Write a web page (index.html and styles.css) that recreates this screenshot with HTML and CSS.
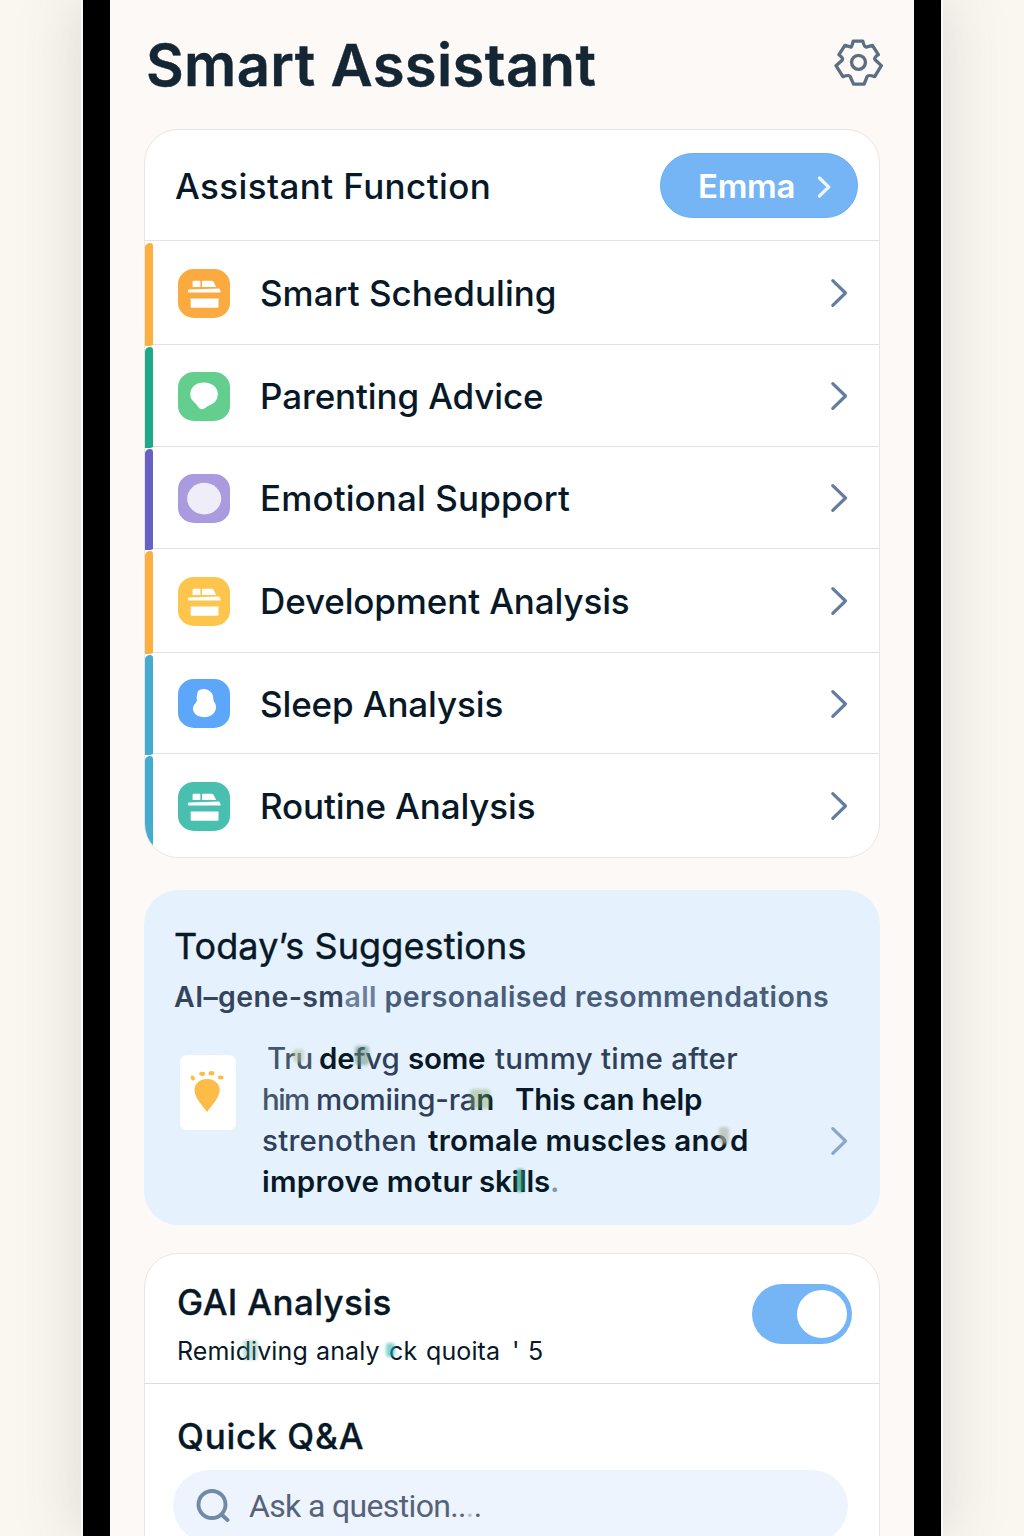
FILE: index.html
```html
<!DOCTYPE html>
<html lang="en">
<head>
<meta charset="utf-8">
<title>Smart Assistant</title>
<link rel="stylesheet" href="styles.css">
</head>
<body>
<svg width="0" height="0" class="defs" aria-hidden="true">
  <symbol id="chevron" viewBox="0 0 18 30"><path d="M2.800 2.700 15.500 15 2.800 27.300"/></symbol>
  <symbol id="box" viewBox="0 0 52 49">
    <path d="M14.600 12.600q0-.9 1-.9h5.900q.9 0 .9.9v5.500h-7.800zM24 12.600q0-.9 1-.9h8.700q1.300 0 1.900 1.100l2.600 5.300H24z"/>
    <path d="M9.800 22q0-1.400 1.400-1.400l30-1.200 1.600 3.400q.3.800-.8.800H11.200q-1.400 0-1.400-1.600z"/>
    <path d="M12.700 29.500h27.800v8.200q0 1-1 1H13.700q-1 0-1-1z"/>
  </symbol>
</svg>
<div class="phone">
  <header class="top">
    <h1 class="title">Smart Assistant</h1>
    <svg class="gear" viewBox="581 57 148 141"><path d="M639 63h29q4 17 10 18l19-5 18 28q-16 10-9 16l18 17-20 33q-20-6-23 0l-9 23h-32l-10-23q-3-6-22 0l-21-33 17-15q8-6-8-18l18-28 19 5q4-8 6-18z"/><circle cx="655" cy="127" r="21"/></svg>
  </header>

  <section class="card functions">
    <div class="functions-head">
      <h2 class="label head-label">Assistant Function</h2>
      <button class="profile"><span class="profile-name">Emma</span><svg class="profile-chev" viewBox="0 0 18 30"><use href="#chevron"/></svg></button>
    </div>
    <div class="row"><span class="stripe amber"></span><div class="row-body">
      <svg class="tile orange" viewBox="0 0 52 49"><use href="#box"/></svg>
      <span class="label l1">Smart Scheduling</span><svg class="chev raised"><use href="#chevron"/></svg></div></div>
    <div class="row"><span class="stripe emerald"></span><div class="row-body">
      <svg class="tile green" viewBox="0 0 52 49"><path d="M26 10.500c8 0 14 5 13.800 11.500-.2 6-3 9-7.800 11-4 1.700-5.500 4.500-8.500 4.200-3-.4-4-4-6.500-6.200-3.500-3-5-5.500-4.700-9.500.4-6.500 5.700-11 13.700-11z"/></svg>
      <span class="label l2">Parenting Advice</span><svg class="chev raised"><use href="#chevron"/></svg></div></div>
    <div class="row"><span class="stripe indigo"></span><div class="row-body">
      <svg class="tile violet" viewBox="0 0 52 49"><ellipse cx="26.200" cy="24.600" rx="17" ry="15.800"/></svg>
      <span class="label l3">Emotional Support</span><svg class="chev"><use href="#chevron"/></svg></div></div>
    <div class="row"><span class="stripe amber"></span><div class="row-body">
      <svg class="tile yellow" viewBox="0 0 52 49"><use href="#box"/></svg>
      <span class="label l4">Development Analysis</span><svg class="chev"><use href="#chevron"/></svg></div></div>
    <div class="row"><span class="stripe cyan"></span><div class="row-body">
      <svg class="tile blue" viewBox="0 0 52 49"><path d="M20 12c2-2 6-2.500 8.500-1.600 4.500 1.300 7 5.100 6.800 9.100-.1 3.500 3 4.500 2.700 9-.4 6-5.500 9.700-11.500 9.700s-11.500-3.200-11.500-8.700c0-4.500 4-5.500 4-9-1-2 .5-6.500 1-8.500z"/></svg>
      <span class="label l5">Sleep Analysis</span><svg class="chev"><use href="#chevron"/></svg></div></div>
    <div class="row"><span class="stripe cyan"></span><div class="row-body">
      <svg class="tile teal" viewBox="0 0 52 49"><use href="#box"/></svg>
      <span class="label l6">Routine Analysis</span><svg class="chev"><use href="#chevron"/></svg></div></div>
  </section>

  <section class="suggestions">
    <h2 class="sugg-title">Today’s Suggestions</h2>
    <p class="sugg-sub"><span class="ink">AI–gene-sm</span><span class="faded">all</span> personalised resommendations</p>
    <div class="sugg-body">
      <svg class="tip" viewBox="0 0 56 75"><path d="M27 57C23 51 14.500 43 14.500 35c0-6.500 5.500-11 12.500-11s12.700 4.500 12.700 11c0 8-8.700 16-12.700 22z"/><ellipse cx="12.800" cy="23" rx="2" ry="2.600" transform="rotate(-30 12.800 23)"/><ellipse cx="22.200" cy="18.800" rx="3" ry="2.100"/><ellipse cx="31.500" cy="18.200" rx="2.900" ry="2.200"/><ellipse cx="40.700" cy="22.500" rx="2.900" ry="1.900"/></svg>
      <div class="lines">
        <div class="line line1"><span class="soft worn smudge s7">Tru</span><span class="strong smudge s1">de<span class="soft">fvg</span></span><span class="strong">some</span><span class="soft spaced">tummy time after</span></div>
        <div class="line line2"><span class="soft worn tight">him</span><span class="soft smudge s2">momiing-ra<b class="strong">n</b></span><span class="strong">This can help</span></div>
        <div class="line line3"><span class="soft spaced">strenothen</span><span class="strong spaced smudge s3">tromale muscles ano<span class="gap">d</span></span></div>
        <div class="line line4"><span class="strong spaced">improve motur</span><span class="strong smudge s4">skills<span class="dot">.</span></span></div>
      </div>
      <svg class="chev pale"><use href="#chevron"/></svg>
    </div>
  </section>

  <section class="card analysis">
    <div class="gai">
      <div>
        <h2 class="label gai-title">GAI Analysis</h2>
        <p class="gai-sub"><span class="smudge s5">Remidiving</span><span>analy</span><span class="smudge s6">ck</span><span>quoita</span><span>'</span><span>5</span></p>
      </div>
      <span class="toggle"><span class="knob"></span></span>
    </div>
    <div class="qa">
      <h2 class="label qa-title">Quick Q&amp;A</h2>
      <div class="search">
        <svg class="lens" viewBox="0 0 34 34"><circle cx="16" cy="15.500" r="13.500"/><path d="m25.500 25.500 6 5.500"/></svg>
        <span class="placeholder">Ask a question..<i class="dim">.</i>.</span>
      </div>
    </div>
  </section>
</div>
</body>
</html>
```

FILE: styles.css
```css
* { box-sizing: border-box; }
body {
  margin: 0;
  height: 1536px;
  overflow: hidden;
  display: flex;
  justify-content: center;
  background: #faf7ef;
  font-family: Inter, "Liberation Sans", sans-serif;
  color: #071827;
}
h1, h2, p { margin: 0; }
.defs { position: absolute; }
.phone {
  width: 858px;
  height: 1536px;
  flex: none;
  padding: 0 34px;
  border: solid #000;
  border-width: 0 27px;
  background: #fdf9f6;
  box-shadow: 0 0 0 2px #f8f8f8, 0 0 60px 4px rgba(70, 75, 75, .17);
}
.top {
  height: 129px;
  display: flex;
  justify-content: space-between;
  padding: 30px 0 0 2px;
}
.title {
  font-size: 58px;
  line-height: 70px;
  font-weight: 600;
  letter-spacing: .35px;
  color: #142534;
  -webkit-text-stroke: .4px;
  white-space: nowrap;
}
.gear { width: 49px; height: 47px; margin: 9px -3px 0 0; fill: none; stroke: #5b6e83; stroke-width: 10; stroke-linejoin: round; }
.card {
  border: 1px solid #e9e6e3;
  border-radius: 34px;
  background: #fff;
  overflow: hidden;
}
.functions {
  height: 729px;
  display: grid;
  grid-template-rows: 111px 104px 102px 102px 104px 101px 1fr;
}
.functions-head {
  display: flex;
  align-items: center;
  justify-content: space-between;
  padding: 1px 21px 0 30px;
  border-bottom: 1px solid #e2e3e3;
}
.label { font-size: 35px; line-height: 42px; font-weight: 500; white-space: nowrap; }
.head-label { letter-spacing: .4px; }
.l2, .l4, .l5, .l6 { letter-spacing: -.13px; }
.l3 { letter-spacing: .1px; }
.profile {
  width: 198px;
  height: 65px;
  display: flex;
  align-items: center;
  padding: 0 26px 0 37px;
  justify-content: space-between;
  border: 1px solid #66acf6;
  border-radius: 33px;
  background: #75b5f6;
  color: #fff;
  font: 600 33px/42px Inter, sans-serif;
  letter-spacing: -.3px;
}
.profile-chev { width: 14px; height: 22px; fill: none; stroke: #edf6ff; stroke-width: 4.4; stroke-linecap: round; margin-top: 2px; }
.row { display: flex; }
.stripe {
  width: 8px;
  flex: none;
  margin: 2px 0 -1px;
  border-radius: 7px 4px 4px 0 / 6px 4px 2px 0;
  position: relative;
}
.row:last-child .stripe { margin-bottom: 0; }
.amber { background: #fbb03f; }
.emerald { background: #1eaa89; }
.indigo { background: #6860c4; }
.cyan { background: #45abcf; }
.row-body {
  flex: 1;
  display: flex;
  align-items: center;
  padding: 1px 31px 0 25px;
  border-bottom: 1px solid #e0e2e4;
}
.row:last-child .row-body { border: 0; }
.tile { width: 52px; height: 49px; border-radius: 16px / 15px; fill: #fff; margin-right: 30px; flex: none; }
.orange { background: #fbaa40; }
.green { background: #64ce8f; }
.violet { background: #a99bdd; fill: #eeedf8; }
.yellow { background: #fec54c; }
.blue { background: #5da7fa; }
.teal { background: #49bfb0; }
.chev {
  width: 18px;
  height: 30px;
  margin-left: auto;
  flex: none;
  fill: none;
  stroke: #637d9e;
  stroke-width: 3.2;
  stroke-linecap: round;
  stroke-linejoin: round;
}
.raised { margin-bottom: 1px; }
.suggestions {
  height: 335px;
  margin-top: 32px;
  padding: 34px 32px 0 30px;
  border-radius: 34px;
  background: #e5f2fe;
}
.sugg-title { font-size: 36px; line-height: 44px; font-weight: 400; letter-spacing: .1px; -webkit-text-stroke: .4px; white-space: nowrap; }
.sugg-sub { margin-top: 11px; font-size: 28.5px; line-height: 36px; font-weight: 600; letter-spacing: .4px; color: #485d79; white-space: nowrap; }
.ink { color: #35445d; }
.faded { color: #6b7e9b; }
.sugg-body { display: flex; margin-top: 23px; }
.tip { width: 56px; height: 75px; margin: 17px 26px 0 6px; border-radius: 7px; background: #fff; fill: #fdbc48; flex: none; }
.lines { font-size: 29.5px; line-height: 41px; white-space: nowrap; letter-spacing: -.25px; }
.line { display: grid; }
.line1 { grid-template-columns: 52px 89px 87px auto; padding-left: 5px; }
.line2 { grid-template-columns: 54px 199px auto; }
.line3 { grid-template-columns: 166px auto; }
.line4 { grid-template-columns: 217px auto; }
.strong { font-weight: 600; color: #071827; }
.soft { font-weight: 500; color: #2e405a; }
.spaced { letter-spacing: .25px; }
.tight { letter-spacing: -1.6px; }
.worn { color: #45566a; }
.gap { margin-left: 2px; }
.dot { color: #8095b4; }
.pale { margin-top: 88px; stroke: #8aa6cc; }
.smudge { position: relative; }
.smudge::after {
  content: "";
  position: absolute;
  filter: blur(1.5px);
  border-radius: 3px;
}
.s1::after { left: 36px; top: 8px; width: 14px; height: 19px; background: rgba(93, 137, 116, .5); }
.s2::after { left: 154px; top: 10px; width: 20px; height: 20px; background: rgba(130, 166, 100, .4); }
.s3::after { left: 291px; top: 7px; width: 10px; height: 17px; background: rgba(173, 181, 160, .65); }
.s4::after { left: 37px; top: 8px; width: 8px; height: 23px; background: rgba(38, 150, 116, .7); }
.s5::after { left: 66px; top: 6px; width: 15px; height: 20px; background: rgba(70, 165, 145, .32); }
.s6::after { left: -3px; top: 9px; width: 9px; height: 14px; background: rgba(28, 178, 178, .55); }
.s7::after { left: 26px; top: 11px; width: 11px; height: 13px; background: rgba(175, 190, 150, .5); }
.analysis { height: 330px; margin-top: 28px; }
.gai {
  height: 130px;
  display: flex;
  justify-content: space-between;
  padding: 27px 27px 0 32px;
  border-bottom: 1px solid #d9dbdd;
}
.gai-title, .qa-title { letter-spacing: .35px; -webkit-text-stroke: .3px; }
.qa-title { letter-spacing: .75px; }
.gai-sub {
  display: grid;
  grid-template-columns: 139px 73px 37px 86px 16px auto;
  margin-top: 11px;
  font-size: 25px;
  line-height: 34px;
  letter-spacing: .1px;
  white-space: nowrap;
}
.toggle {
  width: 100px;
  height: 60px;
  margin-top: 3px;
  padding: 6px 5px;
  display: flex;
  justify-content: flex-end;
  border-radius: 30px;
  background: #75b5f6;
}
.knob { width: 50px; height: 48px; border-radius: 50%; background: #fff; }
.qa { padding: 31px 31px 0 28px; }
.qa-title { padding-left: 4px; }
.search {
  height: 72px;
  margin-top: 13px;
  padding: 0 23px;
  display: flex;
  align-items: center;
  border-radius: 36px;
  background: #edf4fe;
}
.lens { width: 34px; height: 34px; margin: -1px 19px 0 0; fill: none; stroke: #728aa6; stroke-width: 3.9; stroke-linecap: round; }
.placeholder { font: 400 32px/40px Roboto, sans-serif; letter-spacing: -.65px; color: #566278; white-space: nowrap; }
.dim { font-style: normal; color: #b8c2d2; }
```
